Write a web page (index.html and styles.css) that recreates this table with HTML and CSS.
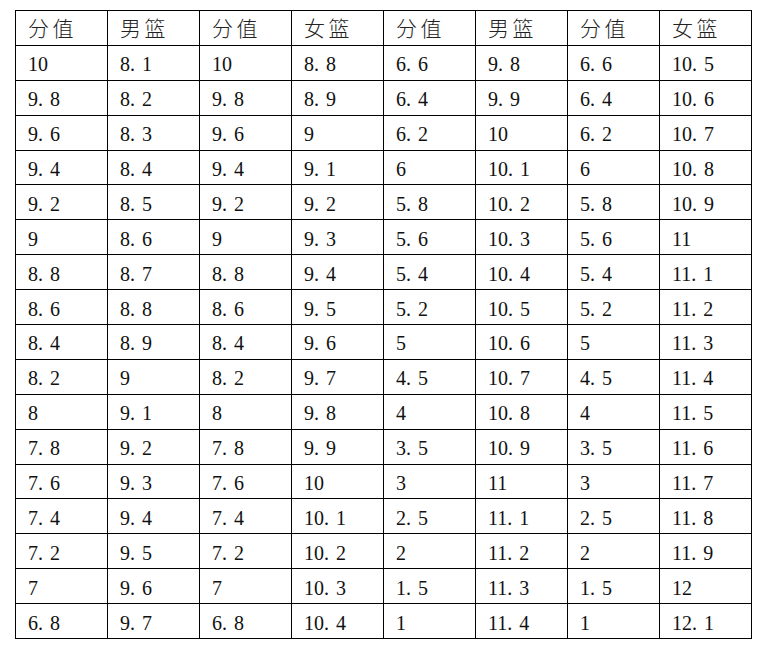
FILE: index.html
```html
<!DOCTYPE html>
<html lang="zh-CN">
<head>
<meta charset="utf-8">
<title>分值表</title>
<link rel="stylesheet" href="styles.css">
</head>
<body>
<table class="score-table">
  <colgroup>
    <col><col><col><col><col><col><col><col>
  </colgroup>
  <thead>
    <tr class="head-row">
      <th>分值</th><th>男篮</th><th>分值</th><th>女篮</th><th>分值</th><th>男篮</th><th>分值</th><th>女篮</th>
    </tr>
  </thead>
  <tbody>
    <tr><td>10</td><td>8<span class="dot">.</span>1</td><td>10</td><td>8<span class="dot">.</span>8</td><td>6<span class="dot">.</span>6</td><td>9<span class="dot">.</span>8</td><td>6<span class="dot">.</span>6</td><td>10<span class="dot">.</span>5</td></tr>
    <tr><td>9<span class="dot">.</span>8</td><td>8<span class="dot">.</span>2</td><td>9<span class="dot">.</span>8</td><td>8<span class="dot">.</span>9</td><td>6<span class="dot">.</span>4</td><td>9<span class="dot">.</span>9</td><td>6<span class="dot">.</span>4</td><td>10<span class="dot">.</span>6</td></tr>
    <tr><td>9<span class="dot">.</span>6</td><td>8<span class="dot">.</span>3</td><td>9<span class="dot">.</span>6</td><td>9</td><td>6<span class="dot">.</span>2</td><td>10</td><td>6<span class="dot">.</span>2</td><td>10<span class="dot">.</span>7</td></tr>
    <tr><td>9<span class="dot">.</span>4</td><td>8<span class="dot">.</span>4</td><td>9<span class="dot">.</span>4</td><td>9<span class="dot">.</span>1</td><td>6</td><td>10<span class="dot">.</span>1</td><td>6</td><td>10<span class="dot">.</span>8</td></tr>
    <tr><td>9<span class="dot">.</span>2</td><td>8<span class="dot">.</span>5</td><td>9<span class="dot">.</span>2</td><td>9<span class="dot">.</span>2</td><td>5<span class="dot">.</span>8</td><td>10<span class="dot">.</span>2</td><td>5<span class="dot">.</span>8</td><td>10<span class="dot">.</span>9</td></tr>
    <tr><td>9</td><td>8<span class="dot">.</span>6</td><td>9</td><td>9<span class="dot">.</span>3</td><td>5<span class="dot">.</span>6</td><td>10<span class="dot">.</span>3</td><td>5<span class="dot">.</span>6</td><td>11</td></tr>
    <tr><td>8<span class="dot">.</span>8</td><td>8<span class="dot">.</span>7</td><td>8<span class="dot">.</span>8</td><td>9<span class="dot">.</span>4</td><td>5<span class="dot">.</span>4</td><td>10<span class="dot">.</span>4</td><td>5<span class="dot">.</span>4</td><td>11<span class="dot">.</span>1</td></tr>
    <tr><td>8<span class="dot">.</span>6</td><td>8<span class="dot">.</span>8</td><td>8<span class="dot">.</span>6</td><td>9<span class="dot">.</span>5</td><td>5<span class="dot">.</span>2</td><td>10<span class="dot">.</span>5</td><td>5<span class="dot">.</span>2</td><td>11<span class="dot">.</span>2</td></tr>
    <tr><td>8<span class="dot">.</span>4</td><td>8<span class="dot">.</span>9</td><td>8<span class="dot">.</span>4</td><td>9<span class="dot">.</span>6</td><td>5</td><td>10<span class="dot">.</span>6</td><td>5</td><td>11<span class="dot">.</span>3</td></tr>
    <tr><td>8<span class="dot">.</span>2</td><td>9</td><td>8<span class="dot">.</span>2</td><td>9<span class="dot">.</span>7</td><td>4<span class="dot">.</span>5</td><td>10<span class="dot">.</span>7</td><td>4<span class="dot">.</span>5</td><td>11<span class="dot">.</span>4</td></tr>
    <tr><td>8</td><td>9<span class="dot">.</span>1</td><td>8</td><td>9<span class="dot">.</span>8</td><td>4</td><td>10<span class="dot">.</span>8</td><td>4</td><td>11<span class="dot">.</span>5</td></tr>
    <tr><td>7<span class="dot">.</span>8</td><td>9<span class="dot">.</span>2</td><td>7<span class="dot">.</span>8</td><td>9<span class="dot">.</span>9</td><td>3<span class="dot">.</span>5</td><td>10<span class="dot">.</span>9</td><td>3<span class="dot">.</span>5</td><td>11<span class="dot">.</span>6</td></tr>
    <tr><td>7<span class="dot">.</span>6</td><td>9<span class="dot">.</span>3</td><td>7<span class="dot">.</span>6</td><td>10</td><td>3</td><td>11</td><td>3</td><td>11<span class="dot">.</span>7</td></tr>
    <tr><td>7<span class="dot">.</span>4</td><td>9<span class="dot">.</span>4</td><td>7<span class="dot">.</span>4</td><td>10<span class="dot">.</span>1</td><td>2<span class="dot">.</span>5</td><td>11<span class="dot">.</span>1</td><td>2<span class="dot">.</span>5</td><td>11<span class="dot">.</span>8</td></tr>
    <tr><td>7<span class="dot">.</span>2</td><td>9<span class="dot">.</span>5</td><td>7<span class="dot">.</span>2</td><td>10<span class="dot">.</span>2</td><td>2</td><td>11<span class="dot">.</span>2</td><td>2</td><td>11<span class="dot">.</span>9</td></tr>
    <tr><td>7</td><td>9<span class="dot">.</span>6</td><td>7</td><td>10<span class="dot">.</span>3</td><td>1<span class="dot">.</span>5</td><td>11<span class="dot">.</span>3</td><td>1<span class="dot">.</span>5</td><td>12</td></tr>
    <tr><td>6<span class="dot">.</span>8</td><td>9<span class="dot">.</span>7</td><td>6<span class="dot">.</span>8</td><td>10<span class="dot">.</span>4</td><td>1</td><td>11<span class="dot">.</span>4</td><td>1</td><td>12<span class="dot">.</span>1</td></tr>
  </tbody>
</table>
</body>
</html>
```

FILE: styles.css
```css
html, body {
  margin: 0;
  padding: 0;
  background: #ffffff;
}

body {
  padding: 10px 0 0 15px;
  font-family: "Liberation Serif", "Noto Sans CJK SC", serif;
  color: #111111;
}

.score-table {
  border-collapse: collapse;
  table-layout: fixed;
  width: 737px;
}

.score-table col {
  width: 92px;
}

.score-table th,
.score-table td {
  border: 1px solid #000000;
  padding: 0 0 0 12px;
  text-align: left;
  vertical-align: middle;
  white-space: nowrap;
  overflow: hidden;
}

.score-table tr {
  height: 34.9px;
}

.score-table th {
  font-family: "Noto Sans CJK SC", sans-serif;
  font-weight: 300;
  font-size: 21px;
  letter-spacing: 3.5px;
  line-height: 1;
  color: #222222;
}

.score-table td {
  font-size: 20px;
  line-height: 1;
  padding-top: 3px;
}

.dot {
  padding-right: 7px;
}
```
